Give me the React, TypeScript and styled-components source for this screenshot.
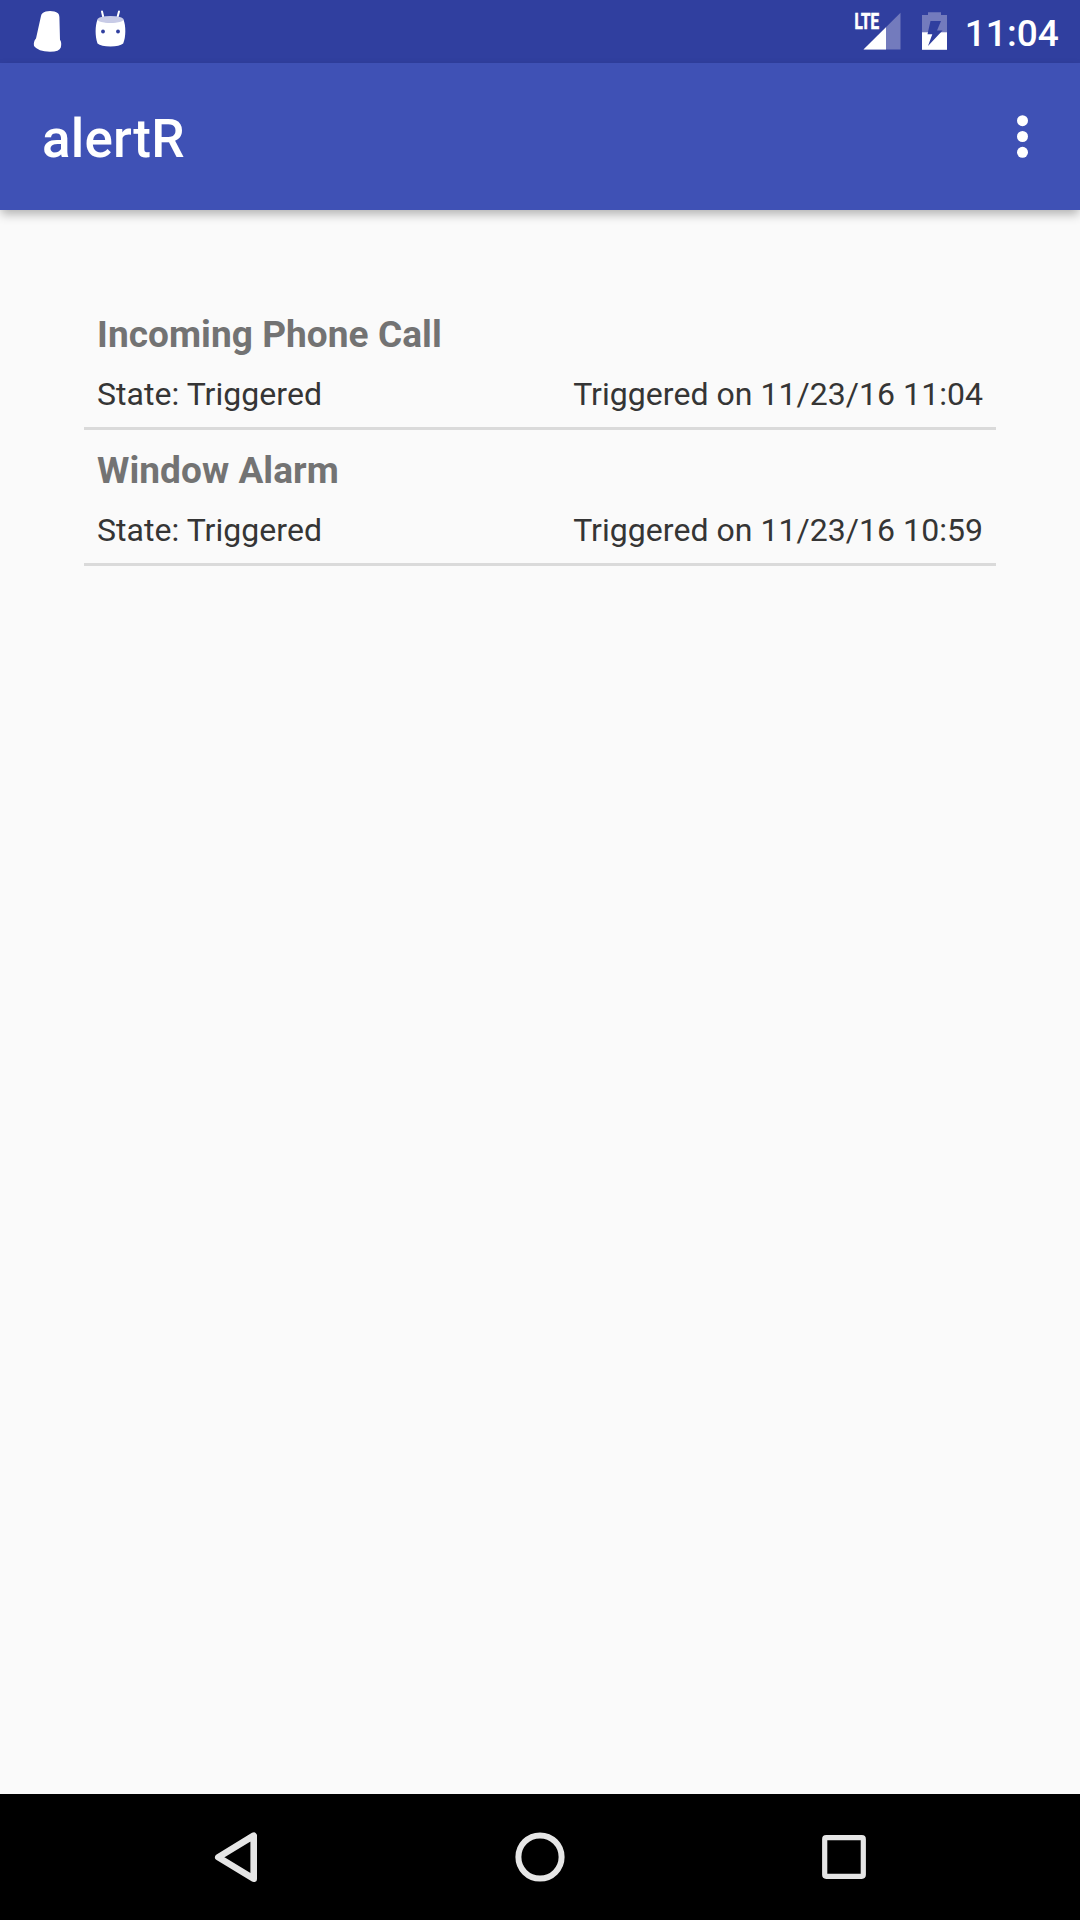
import React from "react";
import styled, { createGlobalStyle } from "styled-components";

const GlobalStyle = createGlobalStyle`
  * { box-sizing: border-box; }
  body { margin: 0; background: #fafafa; font-family: Roboto, "Liberation Sans", sans-serif; }
`;

const Screen = styled.div`
  width: 1080px;
  height: 1920px;
  display: flex;
  flex-direction: column;
  background: #fafafa;
  overflow: hidden;
`;

const StatusBar = styled.header`
  flex: none;
  height: 63px;
  display: flex;
  justify-content: space-between;
  background: #303f9f;
  color: #fff;
`;

const StatusGroup = styled.div`
  display: flex;
  height: 63px;
`;

const Clock = styled.time`
  width: 115px;
  padding-right: 21px;
  display: flex;
  justify-content: flex-end;
  font-size: 37px;
  font-weight: 500;
  line-height: 67px;
  letter-spacing: 0.1px;
  white-space: nowrap;
`;

const AppBar = styled.div`
  flex: none;
  height: 147px;
  padding-left: 42px;
  display: flex;
  align-items: center;
  justify-content: space-between;
  background: #3f51b5;
  color: #fff;
  box-shadow: 0 5px 10px -1px rgba(0, 0, 0, 0.3);
`;

const AppTitle = styled.h1`
  margin: 0;
  padding-top: 5px;
  font-size: 53px;
  font-weight: 500;
  line-height: 62px;
  letter-spacing: 0.2px;
`;

const MenuButton = styled.button`
  width: 105px;
  height: 147px;
  padding: 0;
  border: 0;
  background: none;
`;

const AlertList = styled.ul`
  flex: 1;
  margin: 0;
  padding: 84px;
  list-style: none;
`;

const AlertItem = styled.li`
  height: 136px;
  padding: 16px 13px 11px;
  display: flex;
  flex-direction: column;
  justify-content: space-between;
  border-bottom: 3px solid #dadada;
`;

const AlertName = styled.h2`
  margin: 0;
  font-size: 37px;
  font-weight: 700;
  line-height: 50px;
  letter-spacing: 0.06px;
  color: #737373;
`;

const AlertDetails = styled.div`
  display: flex;
  justify-content: space-between;
  font-size: 32px;
  line-height: 44px;
  letter-spacing: 0.04px;
  color: #353535;
`;

const NavBar = styled.nav`
  flex: none;
  height: 126px;
  display: flex;
  justify-content: center;
  background: #000;
`;

const NavButton = styled.button<{ $width: number }>`
  width: ${(p) => p.$width}px;
  height: 126px;
  padding: 0;
  border: 0;
  background: none;
  display: flex;
  justify-content: center;
`;

const Glyph = styled.svg`
  display: block;
  flex: none;
`;

const alerts = [
  { name: "Incoming Phone Call", state: "Triggered", time: "11/23/16 11:04" },
  { name: "Window Alarm", state: "Triggered", time: "11/23/16 10:59" },
];

const Notifications = () => (
  <Glyph width="140" height="63" viewBox="0 0 140 63">
    <path
      d="M42.500 13.200C46 10.300 54 10.300 58 13.200Q59.300 14.200 59.400 17L60 39.800Q62 42.500 60.800 47.500Q59.500 51.700 50 51.800Q38 51.600 34 46Q33.200 41.500 36 38.500L41 16Q41.400 14 42.500 13.200Z"
      fill="#fff"
    />
    <path d="M102 11.500L103.700 19M119 11.500L117 19" stroke="#fff" strokeWidth="2" strokeLinecap="round" />
    <path
      d="M97.500 19.500Q110 25.500 123.500 19.500C126 26 126 37 123.200 43.500Q119.500 46.500 110.500 46.500Q101 46.500 97.500 43.500C95 36 95 26 97.500 19.500Z"
      fill="#fff"
    />
    <ellipse cx="110.500" cy="19.500" rx="13" ry="3.500" fill="#c8cbe6" />
    <circle cx="103" cy="31.500" r="1.900" fill="#303f9f" />
    <circle cx="118" cy="31.500" r="1.900" fill="#303f9f" />
  </Glyph>
);

const Connectivity = () => (
  <Glyph width="120" height="63" viewBox="845 0 120 63">
    <path d="M900.500 12.700V49.500H863.500Z" fill="#737bbd" />
    <path d="M886 27.200V49.500H863.500Z" fill="#fff" />
    <text
      x="854.500"
      y="29"
      fontSize="22"
      fontWeight="700"
      fill="#fff"
      stroke="#fff"
      strokeWidth="0.700"
      textLength="24.500"
      lengthAdjust="spacingAndGlyphs"
    >
      LTE
    </text>
    <path d="M922 15H928V12.200H941V15H947V33H922Z" fill="#737bbd" />
    <path d="M922 32.300H947V49.800H922Z" fill="#fff" />
    <path d="M930.500 21H941L937 30.500H942.500L928 46L932.300 34.200H927.500Z" fill="#303f9f" />
  </Glyph>
);

export default function App() {
  return (
    <>
      <GlobalStyle />
      <Screen>
        <StatusBar>
          <StatusGroup>
            <Notifications />
          </StatusGroup>
          <StatusGroup>
            <Connectivity />
            <Clock>11:04</Clock>
          </StatusGroup>
        </StatusBar>
        <AppBar>
          <AppTitle>alertR</AppTitle>
          <MenuButton aria-label="More options">
            <Glyph width="105" height="147" viewBox="975 63 105 147" fill="#fff">
              <circle cx="1022.500" cy="120.700" r="5.500" />
              <circle cx="1022.500" cy="136.500" r="5.500" />
              <circle cx="1022.500" cy="152.300" r="5.500" />
            </Glyph>
          </MenuButton>
        </AppBar>
        <AlertList>
          {alerts.map((a) => (
            <AlertItem key={a.name}>
              <AlertName>{a.name}</AlertName>
              <AlertDetails>
                <span>State: {a.state}</span>
                <span>Triggered on {a.time}</span>
              </AlertDetails>
            </AlertItem>
          ))}
        </AlertList>
        <NavBar>
          <NavButton $width={304} aria-label="Back">
            <Glyph width="100" height="126" viewBox="186 1794 100 126">
              <path d="M218.300 1857.300L253.700 1835.600V1878.800Z" fill="none" stroke="#e6e6e6" strokeWidth="6.600" strokeLinejoin="round" />
            </Glyph>
          </NavButton>
          <NavButton $width={304} aria-label="Home">
            <Glyph width="100" height="126" viewBox="490 1794 100 126">
              <circle cx="540" cy="1857" r="21.600" fill="none" stroke="#e6e6e6" strokeWidth="6" />
            </Glyph>
          </NavButton>
          <NavButton $width={304} aria-label="Recent apps">
            <Glyph width="100" height="126" viewBox="794 1794 100 126">
              <rect x="824.700" y="1837.700" width="38.600" height="38.600" rx="1.500" fill="none" stroke="#e6e6e6" strokeWidth="5.200" />
            </Glyph>
          </NavButton>
        </NavBar>
      </Screen>
    </>
  );
}
